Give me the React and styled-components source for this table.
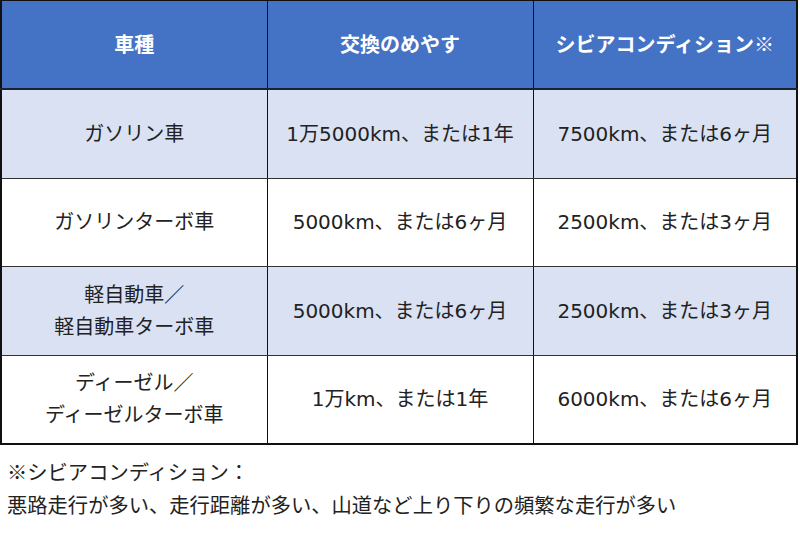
import React from "react";
import styled, { createGlobalStyle } from "styled-components";

const Global = createGlobalStyle`
  html, body { margin: 0; padding: 0; background: #ffffff; }
  body { font-family: "DejaVu Sans", "Noto Sans CJK JP", sans-serif; color: #222222; }
`;

const Page = styled.div`
  width: 800px;
  height: 533px;
  overflow: hidden;
  background: #ffffff;
`;

const Table = styled.table`
  width: 798px;
  border-collapse: collapse;
  table-layout: fixed;
  border-left: 2px solid #111;
  border-right: 2px solid #111;
  border-bottom: 2px solid #111;
  border-top: 1px solid #111;
`;

const Col = styled.col`
  width: ${(p) => p.$w};
`;

const HeadCell = styled.th`
  height: 87px;
  padding: 0;
  background: #4472c4;
  color: #ffffff;
  font-weight: 700;
  font-size: 20px;
  line-height: 32px;
  text-align: center;
  vertical-align: middle;
  border-right: 1px solid #111;
  border-bottom: 2px solid #1a2233;
  &:last-child { border-right: none; }
`;

const Row = styled.tr`
  background: ${(p) => (p.$shade ? "#d9e1f2" : "#ffffff")};
`;

const Cell = styled.td`
  height: 87.5px;
  padding: 0;
  font-size: 20px;
  line-height: 32px;
  text-align: center;
  vertical-align: middle;
  color: #222222;
  border-right: 1px solid #111;
  border-bottom: 1px solid #333;
  &:last-child { border-right: none; }
`;

const Mark = styled.span`
  font-family: "Noto Sans CJK JP", sans-serif;
  font-weight: ${(p) => (p.$bold ? 700 : 400)};
`;

const Note = styled.div`
  padding: 10px 0 0 7px;
  font-size: 20.3px;
  line-height: 33px;
  color: #222222;
`;

const rows = [
  { type: ["ガソリン車"], normal: "1万5000km、または1年", severe: "7500km、または6ヶ月" },
  { type: ["ガソリンターボ車"], normal: "5000km、または6ヶ月", severe: "2500km、または3ヶ月" },
  { type: ["軽自動車／", "軽自動車ターボ車"], normal: "5000km、または6ヶ月", severe: "2500km、または3ヶ月" },
  { type: ["ディーゼル／", "ディーゼルターボ車"], normal: "1万km、または1年", severe: "6000km、または6ヶ月" },
];

export default function App() {
  return (
    <Page>
      <Global />
      <Table>
        <colgroup>
          <Col $w="266px" />
          <Col $w="266px" />
          <Col $w="auto" />
        </colgroup>
        <thead>
          <tr>
            <HeadCell>車種</HeadCell>
            <HeadCell>交換のめやす</HeadCell>
            <HeadCell>
              シビアコンディション<Mark $bold>※</Mark>
            </HeadCell>
          </tr>
        </thead>
        <tbody>
          {rows.map((r, i) => (
            <Row key={i} $shade={i % 2 === 0}>
              <Cell>
                {r.type.map((t, j) => (
                  <div key={j}>{t}</div>
                ))}
              </Cell>
              <Cell>{r.normal}</Cell>
              <Cell>{r.severe}</Cell>
            </Row>
          ))}
        </tbody>
      </Table>
      <Note>
        <div>
          <Mark>※</Mark>シビアコンディション：
        </div>
        <div>悪路走行が多い、走行距離が多い、山道など上り下りの頻繁な走行が多い</div>
      </Note>
    </Page>
  );
}
